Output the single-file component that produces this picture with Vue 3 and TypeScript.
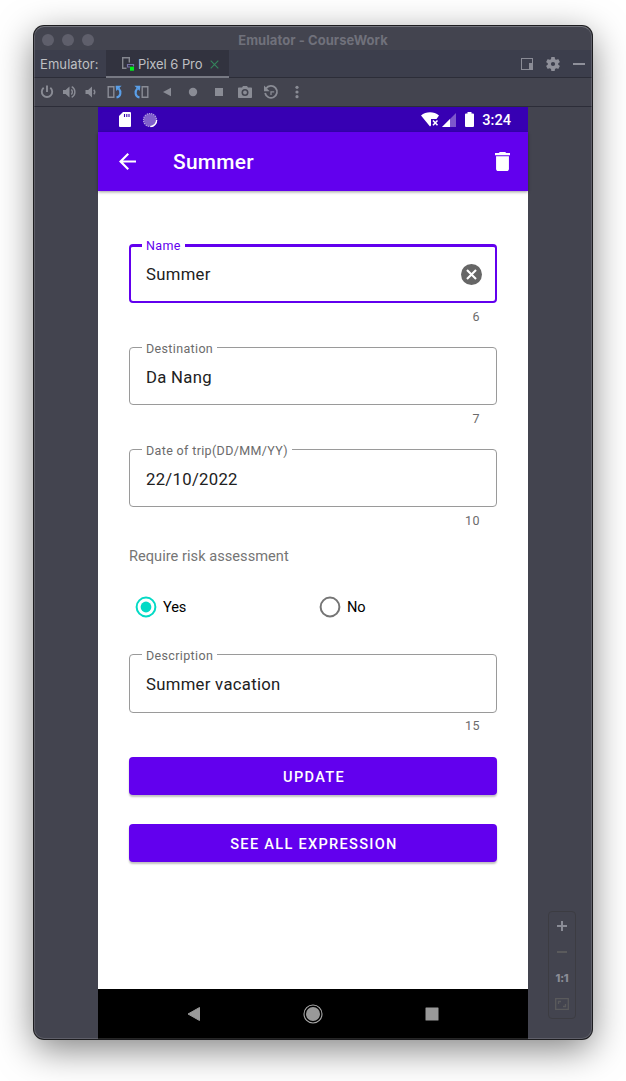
<script setup lang="ts">
interface Field {
  label: string
  value: string
  active?: boolean
}

const tripFields: Field[] = [
  { label: 'Name', value: 'Summer', active: true },
  { label: 'Destination', value: 'Da Nang' },
  { label: 'Date of trip(DD/MM/YY)', value: '22/10/2022' },
]
const description: Field = { label: 'Description', value: 'Summer vacation' }
</script>

<template>
  <div class="desktop">
    <div class="window">
      <header class="titlebar">
        <i class="light"></i><i class="light"></i><i class="light"></i>
        <span class="window-title">Emulator - CourseWork</span>
      </header>

      <div class="tabbar">
        <span class="tab-label">Emulator:</span>
        <div class="tab">
          <svg class="tab-icon" width="14" height="16" viewBox="0 0 14 16">
            <path d="M5.500 12.200H1.700V1.700h6.600V6.500" fill="none" stroke="#85878f" stroke-width="1.400" />
            <path d="M6.500 10.500V8.500h6V10.500M6 11h3" fill="none" stroke="#7771a8" stroke-width="1.200" />
            <rect x="9" y="10.700" width="4" height="4" fill="#00ef1c" />
          </svg>
          <span class="tab-name">Pixel 6 Pro</span>
          <svg class="tab-close" width="9" height="9" viewBox="0 0 9 9">
            <path d="M.7.7l7.600 7.600M8.300.7L.7 8.300" stroke="#35855c" stroke-width="1.100" />
          </svg>
        </div>
        <div class="tab-actions">
          <svg width="12" height="12" viewBox="0 0 12 12">
            <rect x=".5" y=".5" width="11" height="11" fill="none" stroke="#8a8b95" />
            <path d="M8 5h4v7H8z" fill="#8a8b95" />
          </svg>
          <svg width="14" height="14" viewBox="2 2 20 20">
            <path fill="#8f909a" d="M19.430 12.980c.04-.32.07-.64.07-.98s-.03-.66-.07-.98l2.110-1.650c.19-.15.24-.42.12-.64l-2-3.460c-.12-.22-.39-.3-.61-.22l-2.490 1c-.52-.4-1.080-.73-1.690-.98l-.38-2.650A.49.490 0 0 0 14 2h-4c-.25 0-.46.18-.49.42l-.38 2.650c-.61.25-1.170.59-1.690.98l-2.490-1c-.23-.09-.49 0-.61.22l-2 3.460c-.13.22-.07.49.12.64l2.110 1.650c-.04.32-.07.65-.07.98s.03.66.07.98l-2.110 1.650c-.19.15-.24.42-.12.64l2 3.460c.12.22.39.3.61.22l2.490-1c.52.4 1.080.73 1.690.98l.38 2.650c.03.24.24.42.49.42h4c.25 0 .46-.18.49-.42l.38-2.650c.61-.25 1.170-.59 1.690-.98l2.490 1c.23.09.49 0 .61-.22l2-3.460c.12-.22.07-.49-.12-.64zM12 15a3 3 0 1 1 0-6 3 3 0 0 1 0 6z" />
          </svg>
          <svg width="12" height="12" viewBox="0 0 12 12"><path d="M0 5h12v2H0z" fill="#8f909a" /></svg>
        </div>
      </div>

      <div class="toolbar">
        <svg class="narrow" viewBox="0 0 16 16">
          <path d="M8 1.500V8M4.700 3.800a5.200 5.200 0 1 0 6.600 0" fill="none" stroke="#8a8c95" stroke-width="1.900" />
        </svg>
        <svg class="narrow wide-gap" viewBox="0 0 16 16">
          <path d="M1.500 6h2.600L8 2.500v11L4.100 10H1.500z" fill="#8a8c95" />
          <path d="M9.800 5.500a3.500 3.500 0 0 1 0 5M10.200 2.700a6 6 0 0 1 0 10.600" fill="none" stroke="#8a8c95" stroke-width="1.400" />
        </svg>
        <svg class="narrow" viewBox="0 0 16 16">
          <path d="M2.500 6h2.600L9 2.500v11L5.100 10H2.500z" fill="#8a8c95" />
          <path d="M10.800 5.700a3.500 3.500 0 0 1 0 4.600" fill="none" stroke="#8a8c95" stroke-width="1.400" />
        </svg>
        <svg viewBox="0 0 16 16">
          <path d="M1.200 2.700h5.600v10.600H1.200z" fill="none" stroke="#8a8c95" stroke-width="1.400" />
          <path d="M9.500 13.500c4.500-1 5-6 2.200-9" fill="none" stroke="#5a9fe8" stroke-width="2.100" />
          <path d="M8.600 1.800h6L9.300 7z" fill="#5a9fe8" />
        </svg>
        <svg viewBox="0 0 16 16">
          <path d="M9.200 2.700h5.600v10.600H9.200z" fill="none" stroke="#8a8c95" stroke-width="1.400" />
          <path d="M6.500 13.500c-4.500-1-5-6-2.200-9" fill="none" stroke="#5a9fe8" stroke-width="2.100" />
          <path d="M7.400 1.800h-6L6.700 7z" fill="#5a9fe8" />
        </svg>
        <svg viewBox="0 0 16 16"><path d="M4 8l8-4.300v8.600z" fill="#8a8c95" /></svg>
        <svg viewBox="0 0 16 16"><circle cx="8" cy="8" r="4.200" fill="#8a8c95" /></svg>
        <svg viewBox="0 0 16 16"><path d="M4 4h8v8H4z" fill="#8a8c95" /></svg>
        <svg viewBox="0 0 16 16">
          <path fill="#8a8c95" fill-rule="evenodd" d="M2 3.500h3L6 2h4l1 1.500h3c.6 0 1 .4 1 1V13c0 .6-.4 1-1 1H2c-.6 0-1-.4-1-1V4.500c0-.6.4-1 1-1zM8 5a3.500 3.500 0 1 0 0 7 3.500 3.500 0 0 0 0-7z" />
          <circle cx="8" cy="8.500" r="1.900" fill="#8a8c95" />
        </svg>
        <svg viewBox="0 0 16 16">
          <path d="M3 4.500a6 6 0 1 1-.9 4.500" fill="none" stroke="#8a8c95" stroke-width="1.800" />
          <path d="M1 1.500v5.700h5.700z" fill="#8a8c95" />
          <path d="M8 11V7.800h3.200" fill="none" stroke="#8a8c95" stroke-width="1.300" />
        </svg>
        <svg viewBox="0 0 16 16">
          <g fill="#8a8c95"><circle cx="8" cy="3.300" r="1.600" /><circle cx="8" cy="8" r="1.600" /><circle cx="8" cy="12.700" r="1.600" /></g>
        </svg>
      </div>

      <div class="stage">
        <main class="phone">
          <div class="statusbar">
            <svg width="12" height="15" viewBox="0 0 12 15">
              <path fill="#fff" d="M4 0h7a1 1 0 0 1 1 1v13a1 1 0 0 1-1 1H1a1 1 0 0 1-1-1V4z" />
              <path d="M5.500 2v3M7.800 2v3M10 2v3" stroke="#3700b3" stroke-width="1.100" />
            </svg>
            <svg class="spinner" width="16" height="16" viewBox="0 0 16 16">
              <circle cx="8" cy="8" r="6.300" fill="#8160cc" />
              <circle cx="8" cy="8" r="6.500" fill="none" stroke="#b3a0e0" stroke-width="1.200" stroke-dasharray="1.400 .8" />
              <path d="M14.700 8A6.800 6.800 0 0 1 8.500 14.700" fill="none" stroke="#fff" stroke-width="1.300" />
            </svg>
            <span class="spacer"></span>
            <svg width="19" height="15" viewBox="0 0 19 15">
              <path fill="#fff" d="M0 3.500C5-.8 13-.8 18 3.500L15.500 7H10v6.500L9 14.500z" />
              <path d="M12 8.500l4.500 4.800M16.500 8.500L12 13.300" stroke="#fff" stroke-width="1.500" />
            </svg>
            <svg class="signal" width="14" height="14" viewBox="0 0 14 14">
              <path d="M14 0v14H0z" fill="#7d57cc" /><path d="M8 6v8H0z" fill="#fff" />
            </svg>
            <svg class="battery" width="9" height="15" viewBox="0 0 9 15">
              <path fill="#fff" d="M2.500 0h4v1.500H8a1 1 0 0 1 1 1V14a1 1 0 0 1-1 1H1a1 1 0 0 1-1-1V2.500a1 1 0 0 1 1-1h1.500z" />
            </svg>
            <span class="clock">3:24</span>
          </div>

          <div class="appbar">
            <svg width="17" height="17" viewBox="4 4 16 16">
              <path fill="#fff" d="M20 11H7.830l5.590-5.590L12 4l-8 8 8 8 1.410-1.410L7.830 13H20v-2z" />
            </svg>
            <h1>Summer</h1>
            <svg width="15" height="19" viewBox="5 3 14 18" preserveAspectRatio="none">
              <path fill="#fff" d="M6 19c0 1.100.9 2 2 2h8c1.100 0 2-.9 2-2V7H6v12zM19 4h-3.500l-1-1h-5l-1 1H5v2h14V4z" />
            </svg>
          </div>

          <div class="form">
            <div v-for="f in tripFields" :key="f.label" class="field" :class="{ active: f.active }">
              <div class="box">
                <label>{{ f.label }}</label>
                <span>{{ f.value }}</span>
                <svg v-if="f.active" width="21" height="21" viewBox="2 2 20 20">
                  <circle cx="12" cy="12" r="10" fill="#666" />
                  <path d="M7.700 7.700l8.600 8.600M16.300 7.700l-8.600 8.600" stroke="#fff" stroke-width="2" />
                </svg>
              </div>
              <div class="counter">{{ f.value.length }}</div>
            </div>

            <p class="question">Require risk assessment</p>
            <div class="options">
              <div class="option">
                <svg width="22" height="22" viewBox="0 0 22 22">
                  <circle cx="11" cy="11" r="9.400" fill="none" stroke="#03dac5" stroke-width="2" />
                  <circle cx="11" cy="11" r="5.400" fill="#03dac5" />
                </svg>
                <span>Yes</span>
              </div>
              <div class="option">
                <svg width="22" height="22" viewBox="0 0 22 22">
                  <circle cx="11" cy="11" r="9.400" fill="none" stroke="#757575" stroke-width="2" />
                </svg>
                <span>No</span>
              </div>
            </div>

            <div class="field last">
              <div class="box">
                <label>{{ description.label }}</label>
                <span>{{ description.value }}</span>
              </div>
              <div class="counter">{{ description.value.length }}</div>
            </div>

            <button type="button">UPDATE</button>
            <button type="button">SEE ALL EXPRESSION</button>
          </div>

          <nav class="navbar">
            <svg width="20" height="20" viewBox="0 0 20 20"><path d="M4 10l11.500-6.500v13z" fill="#999" stroke="#999" stroke-linejoin="round" /></svg>
            <svg width="20" height="20" viewBox="0 0 20 20">
              <circle cx="10" cy="10" r="9" fill="none" stroke="#aaa" stroke-width="1.100" /><circle cx="10" cy="10" r="7" fill="#999" />
            </svg>
            <svg width="20" height="20" viewBox="0 0 20 20"><rect x="3.500" y="3.500" width="13" height="13" rx=".5" fill="#999" /></svg>
          </nav>
        </main>

        <div class="zoom-panel">
          <svg width="12" height="12" viewBox="0 0 12 12"><path d="M5 1h2v4h4v2H7v4H5V7H1V5h4z" fill="#8a8c96" /></svg>
          <svg width="12" height="12" viewBox="0 0 12 12"><path d="M1 5h10v2H1z" fill="#5a5a5c" /></svg>
          <span>1:1</span>
          <svg width="14" height="12" viewBox="0 0 14 12">
            <path d="M.7.7h12.600v10.600H.7zM3.500 6V3.500H6M8 8.500h2.500V6" fill="none" stroke="#5a5a5c" stroke-width="1.300" />
          </svg>
        </div>
      </div>
    </div>
  </div>
</template>

<style>
body {
  background: #fff;
}
</style>

<style scoped>
* {
  box-sizing: border-box;
}
svg {
  display: block;
  flex: none;
}
.desktop {
  height: 1081px;
  padding: 26px 34px 42px;
  overflow: hidden;
  font-family: Roboto, sans-serif;
}
.window {
  position: relative;
  width: 558px;
  height: 1013px;
  display: flex;
  flex-direction: column;
  background: #43444f;
  border-radius: 10px;
  box-shadow: 0 0 0 1px #1d1d20, 0 10px 36px rgba(0, 0, 0, 0.5);
}
.window::after {
  content: '';
  position: absolute;
  inset: 0;
  border-radius: 10px;
  border: 1px solid rgba(255, 255, 255, 0.15);
  border-top-color: rgba(255, 255, 255, 0.26);
  pointer-events: none;
}
.titlebar {
  position: relative;
  height: 24px;
  flex: none;
  display: flex;
  align-items: center;
  gap: 8px;
  padding: 4px 8px 0;
  font-family: Inter, sans-serif;
}
.light {
  width: 12px;
  height: 12px;
  border-radius: 50%;
  background: #5f5f6b;
}
.window-title {
  position: absolute;
  left: 0;
  right: 0;
  top: 5px;
  text-align: center;
  font-size: 13px;
  line-height: 18px;
  font-weight: 700;
  letter-spacing: 0.06px;
  color: #70717b;
}
.tabbar {
  height: 28px;
  flex: none;
  display: flex;
  background: #3c3e4c;
  border-bottom: 1px solid #2c2d38;
  font-family: Inter, sans-serif;
  font-size: 13px;
  color: #bfc0c3;
}
.tab-label {
  width: 72px;
  padding-left: 6px;
  line-height: 29px;
  letter-spacing: 0.08px;
}
.tab {
  width: 123px;
  height: 28px;
  display: flex;
  align-items: center;
  padding-left: 15px;
  background: #32333f;
  border-bottom: 2px solid #777983;
}
.tab-icon {
  margin-top: 2px;
}
.tab-name {
  width: 68px;
  margin: 2px 4px 0 3px;
  white-space: nowrap;
  letter-spacing: -0.06px;
}
.tab-close {
  margin-top: 3px;
}
.tab-actions {
  margin-left: auto;
  display: flex;
  align-items: center;
  gap: 13px;
  padding-right: 7px;
}
.toolbar {
  height: 29px;
  flex: none;
  display: flex;
  align-items: center;
  padding-left: 2px;
  border-bottom: 1px solid #2c2d38;
}
.toolbar svg {
  width: 26px;
  height: 16px;
}
.toolbar svg.narrow {
  width: 22px;
}
.toolbar svg.wide-gap {
  padding-left: 1px;
}
.stage {
  flex: 1;
  display: flex;
  justify-content: space-between;
  align-items: flex-end;
  padding: 0 16px 0 64px;
}
.phone {
  width: 430px;
  height: 932px;
  display: flex;
  flex-direction: column;
  background: #fff;
}
.statusbar {
  height: 25px;
  flex: none;
  display: flex;
  align-items: center;
  padding: 0 17px 0 21px;
  background: #3700b3;
}
.spinner {
  margin-left: 11px;
}
.spacer {
  flex: 1;
}
.signal {
  margin: 1px 0 0 2px;
}
.battery {
  margin-left: 9px;
}
.clock {
  margin: 1px 0 0 8px;
  font-size: 14.6px;
  line-height: 18px;
  font-weight: 500;
  color: #fff;
}
.appbar {
  height: 59px;
  flex: none;
  display: flex;
  align-items: center;
  padding: 0 18px 0 21px;
  background: #6200ee;
  box-shadow: 0 1px 3px rgba(0, 0, 0, 0.4);
}
h1 {
  flex: 1;
  margin: 1px 0 0 37px;
  font-size: 20.9px;
  line-height: 26px;
  font-weight: 500;
  letter-spacing: 0.3px;
  color: #fff;
}
.form {
  flex: 1;
  padding: 54px 31px 0;
}
.field {
  height: 102px;
}
.field.active {
  height: 103px;
  margin-top: -1px;
}
.box {
  position: relative;
  height: 58px;
  display: flex;
  align-items: center;
  justify-content: space-between;
  padding: 2px 14px 0 16px;
  border: 1px solid #9a9a9a;
  border-radius: 4px;
  font-size: 16.7px;
  letter-spacing: 0.3px;
  color: #212121;
}
.active .box {
  height: 59px;
  padding: 0 13px 0 15px;
  border: 2px solid #6200ee;
  border-top-width: 3px;
}
.box label {
  position: absolute;
  left: 12px;
  top: -8px;
  padding: 0 4px;
  background: #fff;
  font-size: 12.5px;
  line-height: 17px;
  letter-spacing: 0.35px;
  color: #6b6b6b;
}
.active .box label {
  left: 11px;
  top: -10px;
  color: #6200ee;
}
.counter {
  padding: 6px 17px 0 0;
  text-align: right;
  font-size: 12.5px;
  line-height: 16px;
  letter-spacing: 0.42px;
  color: #6b6b6b;
}
.question {
  margin: -5px 0 0;
  font-size: 14.6px;
  line-height: 20px;
  letter-spacing: 0.03px;
  color: #757575;
}
.options {
  display: flex;
  margin-top: 30px;
}
.option {
  width: 184px;
  display: flex;
  align-items: center;
  gap: 6px;
  padding-left: 6px;
  font-size: 14.6px;
  color: #000;
}
.option span {
  letter-spacing: -0.1px;
}
.field.last {
  height: 103px;
  margin-top: 36px;
}
.last .box {
  height: 59px;
}
.last .counter {
  padding-top: 5px;
}
button {
  display: block;
  width: 368px;
  height: 38px;
  margin: 0 0 29px;
  padding: 1px 0 0 2px;
  border: 0;
  border-radius: 4px;
  background: #6200ee;
  box-shadow: 0 2px 2px rgba(0, 0, 0, 0.25);
  font-family: Roboto, sans-serif;
  font-size: 14.6px;
  font-weight: 500;
  letter-spacing: 1.28px;
  color: #fff;
}
.navbar {
  height: 50px;
  flex: none;
  display: flex;
  align-items: center;
  justify-content: center;
  gap: 99px;
  background: #000;
}
.zoom-panel {
  width: 28px;
  height: 108px;
  margin-bottom: 20px;
  display: flex;
  flex-direction: column;
  align-items: center;
  justify-content: space-between;
  padding: 8px 0;
  border: 1px solid #3c3c42;
  border-radius: 4px;
}
.zoom-panel span {
  font-family: Inter, sans-serif;
  font-size: 11px;
  line-height: 12px;
  font-weight: 800;
  letter-spacing: -0.2px;
  color: #8a8c96;
}
</style>
